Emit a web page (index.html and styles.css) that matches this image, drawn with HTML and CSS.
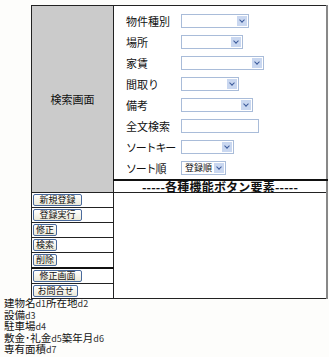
FILE: index.html
```html
<!DOCTYPE html>
<html lang="ja">
<head>
    <meta charset="UTF-8">
    <title>検索画面</title>
    <link rel="stylesheet" href="styles.css">
</head>
<body>
    <table class="frame">
        <tr>
            <td class="side" rowspan="2">検索画面</td>
            <td class="search">
                <div class="search-grid">
                    <span>物件種別</span><div class="sel" style="width:66px"><i></i></div>
                    <span>場所</span><div class="sel" style="width:60px"><i></i></div>
                    <span>家賃</span><div class="sel" style="width:81px"><i></i></div>
                    <span>間取り</span><div class="sel" style="width:56px"><i></i></div>
                    <span>備考</span><div class="sel" style="width:70px"><i></i></div>
                    <span>全文検索</span><div class="txt" style="width:76px"></div>
                    <span class="kana">ソートキー</span><div class="sel" style="width:51px"><i></i></div>
                    <span class="kana">ソート順</span><div class="sel" style="width:43px"><b>登録順</b><i></i></div>
                </div>
            </td>
        </tr>
        <tr>
            <td class="caption">-----各種機能ボタン要素-----</td>
        </tr>
        <tr>
            <td class="btn-cell"><button>新規登録</button></td>
            <td class="blank" rowspan="7"></td>
        </tr>
        <tr><td class="btn-cell"><button>登録実行</button></td></tr>
        <tr><td class="btn-cell"><button class="short">修正</button></td></tr>
        <tr><td class="btn-cell"><button class="short">検索</button></td></tr>
        <tr><td class="btn-cell thick"><button class="short">削除</button></td></tr>
        <tr><td class="btn-cell"><button>修正画面</button></td></tr>
        <tr><td class="btn-cell"><button class="mid">お問合せ</button></td></tr>
    </table>

    <div class="fields">
        <div>建物名<small>d1</small>所在地<small>d2</small></div>
        <div>設備<small>d3</small></div>
        <div>駐車場<small>d4</small></div>
        <div>敷金･礼金<small>d5</small>築年月<small>d6</small></div>
        <div>専有面積<small>d7</small></div>
    </div>
</body>
</html>
```

FILE: styles.css
```css
body {
    margin: 0;
    padding: 4px;
    background: #fdfdfb;
    font-family: "Noto Sans CJK JP", sans-serif;
    font-size: 11px;
    color: #111;
}

.frame {
    margin: 1px 0 0 27px;
    width: 297px;
    border-collapse: collapse;
    border-left: 1px solid #222;
    border-top: 1px solid #222;
    border-right: 2px solid #888;
    border-bottom: 1px solid #222;
    background: #fff;
}

.frame td {
    padding: 0;
    border: 1px solid #222;
}

.frame .side {
    width: 81px;
    background: #cbcbcb;
    text-align: center;
    vertical-align: middle;
    font-size: 11px;
}

.frame .search {
    height: 173px;
    vertical-align: top;
}

.search-grid {
    display: grid;
    grid-template-columns: 55px auto;
    grid-auto-rows: 21px;
    align-items: center;
    padding: 4px 0 0 12px;
    font-size: 11px;
}

.search-grid .kana {
    letter-spacing: -1.2px;
}

.sel, .txt {
    height: 12px;
    border: 1px solid #a9bcd9;
    background: #fff;
    position: relative;
}

.sel i {
    position: absolute;
    right: 1px;
    top: 1px;
    width: 10px;
    height: 10px;
    background: #c9d7f0;
}

.sel i::after {
    content: "";
    position: absolute;
    left: 3px;
    top: 2px;
    width: 3px;
    height: 3px;
    border-right: 1.5px solid #3b5a99;
    border-bottom: 1.5px solid #3b5a99;
    transform: rotate(45deg);
}

.sel b {
    display: block;
    font-weight: normal;
    font-size: 9px;
    line-height: 12px;
    padding-left: 3px;
}

.frame .caption {
    height: 11px;
    border-top: 2px solid #111;
    text-align: center;
    font-weight: bold;
    font-size: 12px;
    line-height: 11px;
    letter-spacing: 0.2px;
}

.frame .btn-cell {
    height: 14px;
    padding-left: 1px;
}

.frame .btn-cell.thick {
    border-bottom: 2px solid #111;
}

.frame .blank {
    vertical-align: top;
}

button {
    display: block;
    width: 49px;
    height: 12px;
    margin: 1px 0;
    padding: 0;
    border: 1px solid #4a6a9c;
    border-radius: 2px;
    background: linear-gradient(#fff, #ece9d8);
    font-family: "Noto Sans CJK JP", sans-serif;
    font-size: 9px;
    line-height: 10px;
    color: #111;
}

button.short {
    width: 24px;
}

button.mid {
    width: 45px;
}

.fields {
    margin-top: -2px;
    line-height: 11.5px;
    font-size: 10.5px;
}

.fields small {
    font-size: 9px;
    line-height: 1;
    color: #333;
}
```
